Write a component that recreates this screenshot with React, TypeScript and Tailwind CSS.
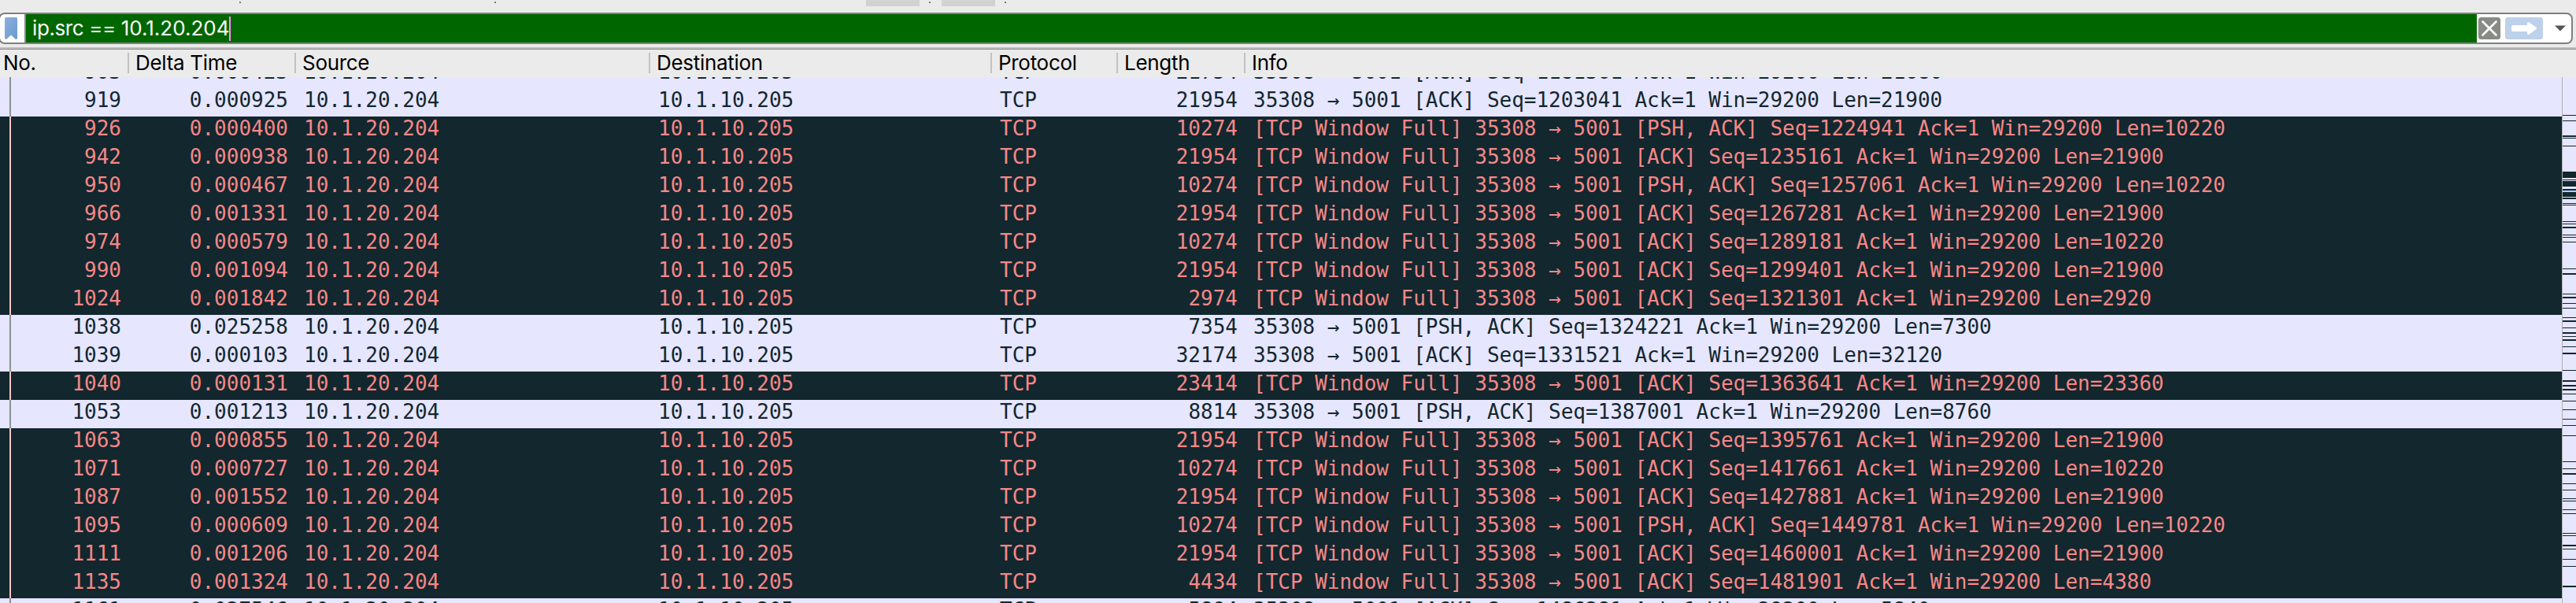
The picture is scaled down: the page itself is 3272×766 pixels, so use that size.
type Row = [string, string, string, string, boolean];

const W = "[TCP Window Full] 35308 → 5001 ";
const N = "35308 → 5001 ";

const rows: Row[] = [
  ["903", "0.000423", "21754", N + "[ACK] Seq=1181361 Ack=1 Win=29200 Len=21680", false],
  ["919", "0.000925", "21954", N + "[ACK] Seq=1203041 Ack=1 Win=29200 Len=21900", false],
  ["926", "0.000400", "10274", W + "[PSH, ACK] Seq=1224941 Ack=1 Win=29200 Len=10220", true],
  ["942", "0.000938", "21954", W + "[ACK] Seq=1235161 Ack=1 Win=29200 Len=21900", true],
  ["950", "0.000467", "10274", W + "[PSH, ACK] Seq=1257061 Ack=1 Win=29200 Len=10220", true],
  ["966", "0.001331", "21954", W + "[ACK] Seq=1267281 Ack=1 Win=29200 Len=21900", true],
  ["974", "0.000579", "10274", W + "[ACK] Seq=1289181 Ack=1 Win=29200 Len=10220", true],
  ["990", "0.001094", "21954", W + "[ACK] Seq=1299401 Ack=1 Win=29200 Len=21900", true],
  ["1024", "0.001842", "2974", W + "[ACK] Seq=1321301 Ack=1 Win=29200 Len=2920", true],
  ["1038", "0.025258", "7354", N + "[PSH, ACK] Seq=1324221 Ack=1 Win=29200 Len=7300", false],
  ["1039", "0.000103", "32174", N + "[ACK] Seq=1331521 Ack=1 Win=29200 Len=32120", false],
  ["1040", "0.000131", "23414", W + "[ACK] Seq=1363641 Ack=1 Win=29200 Len=23360", true],
  ["1053", "0.001213", "8814", N + "[PSH, ACK] Seq=1387001 Ack=1 Win=29200 Len=8760", false],
  ["1063", "0.000855", "21954", W + "[ACK] Seq=1395761 Ack=1 Win=29200 Len=21900", true],
  ["1071", "0.000727", "10274", W + "[ACK] Seq=1417661 Ack=1 Win=29200 Len=10220", true],
  ["1087", "0.001552", "21954", W + "[ACK] Seq=1427881 Ack=1 Win=29200 Len=21900", true],
  ["1095", "0.000609", "10274", W + "[PSH, ACK] Seq=1449781 Ack=1 Win=29200 Len=10220", true],
  ["1111", "0.001206", "21954", W + "[ACK] Seq=1460001 Ack=1 Win=29200 Len=21900", true],
  ["1135", "0.001324", "4434", W + "[ACK] Seq=1481901 Ack=1 Win=29200 Len=4380", true],
  ["1161", "0.027546", "5894", N + "[ACK] Seq=1486281 Ack=1 Win=29200 Len=5840", false],
];

// Scroll-bar overview: [y, height] of each dark band, measured from the window top.
const bands: [number, number][] = [
  [146, 1], [153, 1], [172, 2], [175, 1], [185, 1], [218, 8], [228, 1], [230, 7], [240, 2], [244, 6],
  [251, 2], [258, 1], [260, 1], [281, 1], [284, 1], [288, 2], [298, 1], [301, 1], [307, 1], [341, 1],
  [347, 2], [373, 1], [377, 2], [385, 1], [391, 1], [403, 1], [407, 2], [416, 1], [422, 2], [427, 1],
  [431, 2], [440, 1], [448, 2], [470, 1], [483, 2], [489, 2], [494, 2], [500, 1], [509, 1], [520, 1],
  [532, 1], [540, 1], [553, 1], [586, 1], [595, 1], [601, 2], [614, 1], [622, 1], [633, 1], [636, 1],
  [647, 1], [652, 1], [677, 1], [680, 1], [692, 2], [697, 1], [710, 1], [719, 1], [744, 2],
];

const columns: [string, string][] = [
  ["No.", "w-[164px] pl-[4px]"],
  ["Delta Time", "w-[212px] pl-[8px]"],
  ["Source", "w-[450px] pl-[8px]"],
  ["Destination", "w-[434px] pl-[8px]"],
  ["Protocol", "w-[160px] pl-[8px]"],
  ["Length", "w-[162px] pl-[8px]"],
  ["Info", "flex-1 pl-[8px]"],
];

function PacketRow({ row }: { row: Row }) {
  const [no, time, length, info, bad] = row;
  return (
    <div
      className={
        "flex h-9 shrink-0 whitespace-pre leading-[30px] " +
        (bad ? "bg-[#12272e] text-[#f78787]" : "bg-[#e6e6ff] text-[#12272e]")
      }
    >
      <div className={"ml-3 w-[2px] " + (bad ? "bg-[#fbc3c3]" : "bg-[#889399]")} />
      <div className="w-[140px] text-right">{no}</div>
      <div className="w-[212px] text-right">{time}</div>
      <div className="w-[450px] pl-5">{"10.1.20.204"}</div>
      <div className="w-[434px] pl-5">{"10.1.10.205"}</div>
      <div className="w-[160px] pl-5">TCP</div>
      <div className="w-[162px] text-right">{length}</div>
      <div className="flex-1 pl-5 tracking-[-0.025px]">{info}</div>
    </div>
  );
}

export default function App() {
  return (
    <div className="flex h-[766px] w-[3272px] flex-col overflow-hidden bg-[#ebebeb] font-['Inter',sans-serif] text-black">
      <div className="flex h-4 shrink-0 items-start">
        <div className="ml-[304px] mt-[2px] h-[2px] w-[2px] bg-[#777777]" />
        <div className="ml-[322px] mt-[2px] h-[2px] w-[2px] bg-[#777777]" />
        <div className="ml-[470px] h-2 w-[68px] bg-[#d2d2d2]" />
        <div className="ml-[12px] mt-[2px] h-[2px] w-[2px] bg-[#777777]" />
        <div className="ml-[14px] h-2 w-[68px] bg-[#d2d2d2]" />
        <div className="ml-[12px] mt-[2px] h-[2px] w-[2px] bg-[#777777]" />
      </div>

      <div className="-ml-[2px] mr-1 flex h-10 shrink-0 overflow-hidden rounded-lg border-2 border-[#7f7f7f] bg-white">
        <div className="flex w-[33px] items-center border-r-2 border-[#8a8a8a] pl-[6px]">
          <svg width="16" height="28" viewBox="0 0 16 28">
            <defs>
              <linearGradient id="mark" x1="0" y1="0" x2="1" y2="1">
                <stop offset="0" stopColor="#8db0dc" />
                <stop offset="1" stopColor="#6a9ad0" />
              </linearGradient>
            </defs>
            <path d="M0 1.500Q0 0 1.500 0H14.500Q16 0 16 1.500V27L14 28L8 22.500L2 28L0 27Z" fill="url(#mark)" />
          </svg>
        </div>
        <div className="flex flex-1 items-center whitespace-pre bg-[#006600] pl-2 text-[26px] leading-[34px] tracking-[-0.4px] text-white">
          <span>
            ip.src == <span className="tracking-normal">10.1.20.204</span>
          </span>
          <span className="h-[31px] w-[2px] bg-[#ff8cff]" />
        </div>
        <div className="flex w-[120px] items-center pl-[2px]">
          <svg width="28" height="28" viewBox="0 0 28 28">
            <rect width="28" height="28" rx="3.500" fill="#888a85" />
            <path d="M5.500 5.500L22.500 22.500M22.500 5.500L5.500 22.500" stroke="#fff" strokeWidth="2.600" strokeLinecap="round" />
          </svg>
          <svg className="ml-[6px]" width="48" height="28" viewBox="0 0 48 28">
            <rect width="48" height="28" rx="3.500" fill="#bdd1ea" />
            <path d="M10 10H28V7.500Q28 6 30 6L39 12.500Q41 14 39 15.500L30 22Q28 22 28 20.500V18H10Q8 18 8 16V12Q8 10 10 10Z" fill="#fff" />
          </svg>
          <svg className="ml-[15px]" width="14" height="8" viewBox="0 0 14 8">
            <path d="M0 0.500H14L7 7.500Z" fill="#555" />
          </svg>
        </div>
      </div>

      <div className="mt-1 h-[2px] shrink-0 bg-[#bfbfbf]" />
      <div className="h-px shrink-0 bg-[#8a8a8a]" />

      <div className="flex h-[35px] shrink-0 text-[26px] leading-[33px]">
        {columns.map(([name, cls], i) => (
          <div key={name} className={"flex items-start " + cls}>
            <span className="flex-1 tracking-[-0.3px]">{name}</span>
            {i < columns.length - 1 && <span className="mt-1 h-[26px] w-[2px] bg-[#c2c2c2]" />}
          </div>
        ))}
      </div>

      <div className="flex min-h-0 flex-1">
        <div className="flex flex-1 flex-col overflow-hidden font-['DejaVu_Sans_Mono',monospace] text-[26px]">
          <div className="-mt-[22px] flex flex-col">
            {rows.map((r) => (
              <PacketRow key={r[0]} row={r} />
            ))}
          </div>
        </div>
        <svg className="shrink-0" width="18" height="668" viewBox="0 98 18 668" shapeRendering="crispEdges">
          <rect y="98" width="18" height="668" fill="#e6e6ff" />
          <rect y="98" width="1" height="668" fill="#b0b0b0" />
          <rect x="1" y="242" width="17" height="2" fill="#a6d2ff" />
          {bands.map(([y, h]) => (
            <rect key={y} x="1" y={y} width="17" height={h} fill="#12272e" />
          ))}
        </svg>
      </div>
    </div>
  );
}
